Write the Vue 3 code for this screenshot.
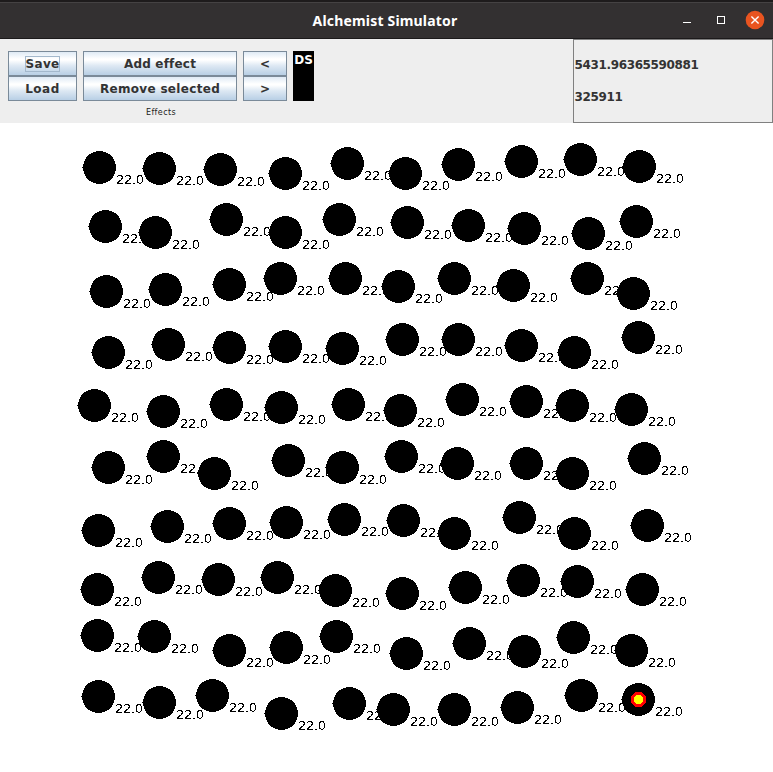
<script setup>
const rows = [
  [[99,167],[159,168],[220,169],[285,173],[347,163],[405,173],[458,164],[521,161],[580,159],[639,166]],
  [[105,226],[155,232],[226,219],[285,232],[339,219],[407,222],[468,225],[524,228],[588,233],[636,221]],
  [[106,291],[165,289],[229,284],[280,278],[345,278],[398,286],[454,278],[513,285],[587,278],[633,293]],
  [[108,352],[168,344],[229,347],[285,346],[342,348],[402,339],[458,339],[521,345],[574,352],[638,337]],
  [[94,405],[163,411],[226,404],[281,407],[348,404],[400,410],[462,399],[526,401],[572,405],[631,409]],
  [[108,467],[163,456],[214,473],[288,460],[342,467],[401,456],[457,463],[526,463],[572,473],[644,458]],
  [[98,530],[167,526],[229,523],[286,522],[344,519],[403,520],[454,533],[519,517],[574,533],[647,525]],
  [[97,589],[158,577],[218,579],[277,577],[335,590],[402,593],[465,587],[523,580],[577,581],[642,589]],
  [[97,635],[154,636],[229,650],[286,647],[336,636],[406,653],[469,643],[524,651],[573,637],[631,650]],
  [[98,696],[159,702],[212,695],[281,713],[349,703],[393,709],[454,709],[517,707],[581,695],[638,699]],
]
const nodes = rows.flat().map(([x, y]) => ({ x, y, value: '22.0' }))
</script>

<template>
  <div class="window">
    <header class="titlebar">
      <span class="side"></span>
      <h1 class="title">Alchemist Simulator</h1>
      <div class="side controls">
        <svg width="90" height="36" viewBox="0 0 90 36">
          <rect x="0" y="20" width="8" height="1" fill="#fff" />
          <rect x="34.5" y="14.5" width="7" height="7" fill="none" stroke="#fff" />
          <circle cx="72" cy="18" r="9.3" fill="#e95420" />
          <path d="M68.4 14.4l7.2 7.2M75.6 14.4l-7.2 7.2" stroke="#fff" stroke-width="1.4" />
        </svg>
      </div>
    </header>

    <section class="toolbar">
      <div class="effects">
        <div class="groups">
          <div class="stack file">
            <button class="btn"><span class="focus">Save</span></button>
            <button class="btn"><span class="load">Load</span></button>
          </div>
          <div class="stack edit">
            <button class="btn"><span class="add">Add effect</span></button>
            <button class="btn"><span class="remove">Remove selected</span></button>
          </div>
          <div class="stack order">
            <button class="btn">&lt;</button>
            <button class="btn">&gt;</button>
          </div>
          <div class="chip">DS</div>
        </div>
        <div class="caption">Effects</div>
      </div>
      <div class="status">
        <div>5431.96365590881</div>
        <div>325911</div>
      </div>
    </section>

    <svg class="canvas" width="773" height="649" viewBox="0 123 773 649">
      <defs>
        <filter id="crisp" x="0" y="0" width="1" height="1" color-interpolation-filters="sRGB">
          <feComponentTransfer><feFuncA type="discrete" tableValues="0 0 0 0 1 1 1 1" /></feComponentTransfer>
        </filter>
      </defs>
      <g class="values" filter="url(#crisp)">
        <text v-for="(n, i) in nodes" :key="i" :x="n.x + 17" :y="n.y + 17">{{ n.value }}</text>
      </g>
      <g shape-rendering="crispEdges">
        <template v-for="(n, i) in nodes" :key="i">
          <circle :cx="n.x + 0.5" :cy="n.y + 0.5" r="16.5" />
          <rect :x="n.x - 17" :y="n.y" width="1" height="1" />
        </template>
        <circle cx="638.5" cy="699.5" r="7.8" fill="#f00" />
        <circle cx="638.5" cy="699.5" r="4.9" fill="#ff0" />
      </g>
    </svg>
  </div>
</template>

<style>
body { margin: 0; background: #fff; overflow: hidden; }
</style>

<style scoped>
.window { width: 773px; height: 772px; display: flex; flex-direction: column; background: #fff; font-family: "DejaVu Sans", sans-serif; overflow: hidden; }
.titlebar { box-sizing: border-box; height: 39px; flex: none; display: flex; align-items: stretch; justify-content: space-between; background: #333031; border-top: 2px solid #1e1b1c; border-bottom: 1px solid #1c1a1b; box-shadow: inset 0 1px #454243; }
.side { width: 90px; }
.title { margin: 0; padding-right: 3px; font: bold 14px/37px "Noto Sans", sans-serif; letter-spacing: 0.18px; color: #fff; white-space: nowrap; }
.controls svg { display: block; }
.toolbar { height: 84px; flex: none; display: flex; justify-content: space-between; background: #eee; }
.effects { padding: 12px 0 0 8px; width: 306px; }
.groups { display: flex; gap: 6px; }
.stack { display: flex; flex-direction: column; }
.file { width: 69px; }
.edit { width: 154px; }
.order { width: 44px; }
.btn { box-sizing: border-box; height: 25px; width: 100%; margin: 0; padding: 0; display: flex; align-items: center; justify-content: center; border: 1px solid #7a8a99; border-radius: 0; background: linear-gradient(#dfeaf5 0%, #fff 30%, #fff 35%, #dde8f3 60%, #b8cfe5 100%); font: bold 12px/14px "DejaVu Sans", sans-serif; color: #333; white-space: nowrap; }
.focus { outline: 1px solid #a3b8cc; line-height: 14px; letter-spacing: 0.3px; }
.load { letter-spacing: 0.5px; }
.add { letter-spacing: 0.2px; }
.remove { letter-spacing: 0.32px; }
.chip { width: 21px; height: 50px; background: #000; color: #fff; font: bold 12px/19px "DejaVu Sans", sans-serif; text-align: center; }
.caption { margin-top: 7px; font-size: 8px; line-height: 10px; color: #222; text-align: center; letter-spacing: 0.4px; }
.status { box-sizing: border-box; width: 200px; border: 1px solid #808080; padding: 9px 0 0 0.5px; font-size: 12px; font-weight: bold; line-height: 32px; color: #333; letter-spacing: -0.36px; }
.canvas { display: block; flex: none; }
.values { font-family: "DejaVu Sans", sans-serif; font-size: 13px; letter-spacing: -0.27px; fill: #000; }
</style>
